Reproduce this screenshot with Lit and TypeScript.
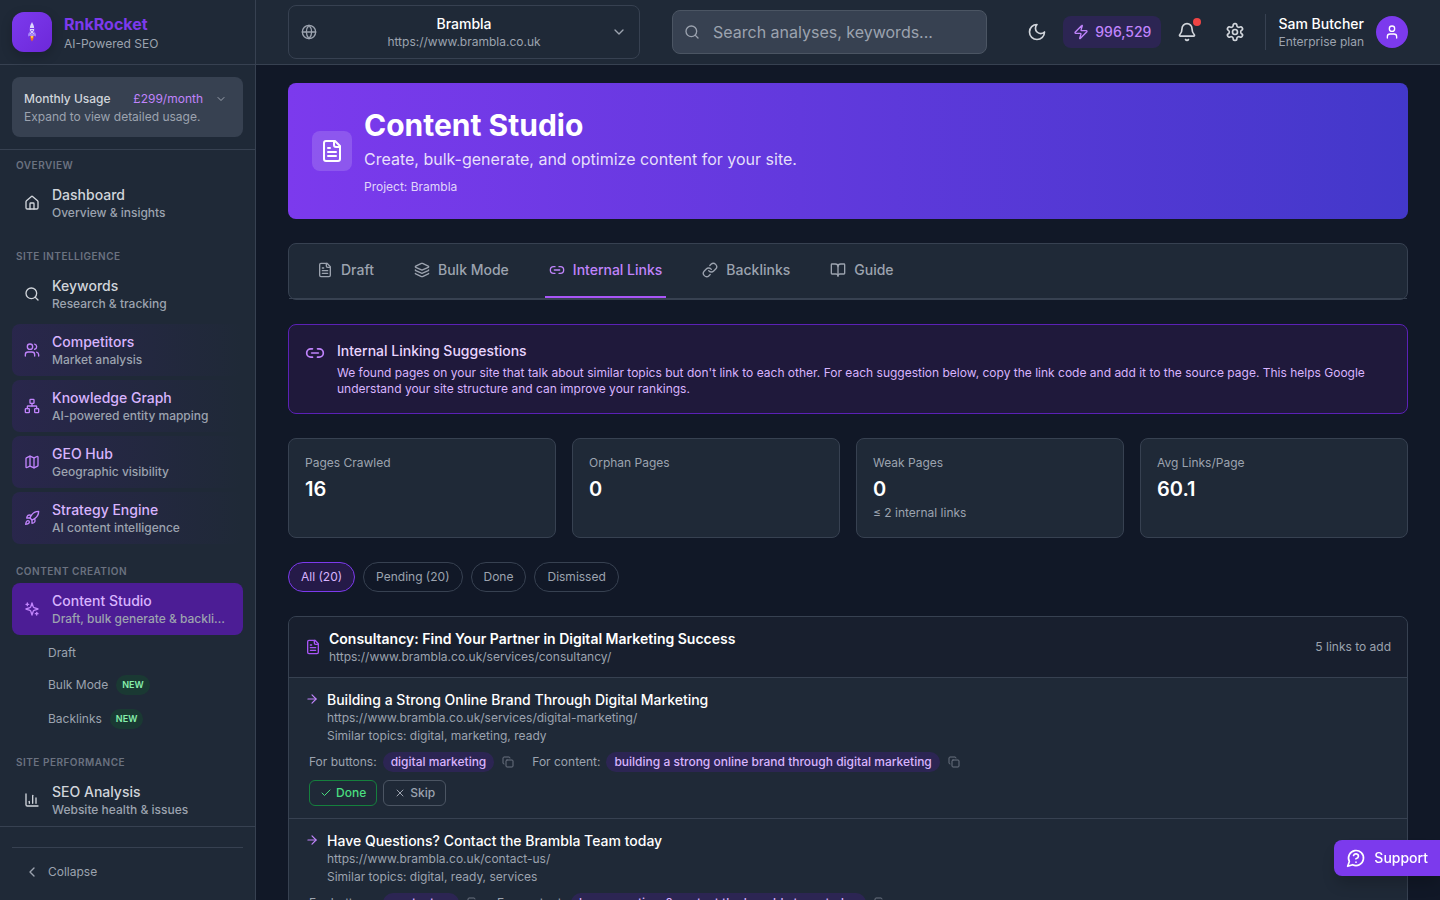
import { LitElement, html, css, svg, nothing } from "lit";
import type { TemplateResult, SVGTemplateResult } from "lit";
import { customElement, property, state } from "lit/decorators.js";
import { classMap } from "lit/directives/class-map.js";

const ICONS: Record<string, SVGTemplateResult> = {
  house: svg`<path d="M15 21v-8a1 1 0 0 0-1-1h-4a1 1 0 0 0-1 1v8"/><path d="M3 10a2 2 0 0 1 .709-1.528l7-5.999a2 2 0 0 1 2.582 0l7 5.999A2 2 0 0 1 21 10v9a2 2 0 0 1-2 2H5a2 2 0 0 1-2-2z"/>`,
  search: svg`<circle cx="11" cy="11" r="8"/><path d="m21 21-4.3-4.3"/>`,
  users: svg`<path d="M16 21v-2a4 4 0 0 0-4-4H6a4 4 0 0 0-4 4v2"/><circle cx="9" cy="7" r="4"/><path d="M22 21v-2a4 4 0 0 0-3-3.87"/><path d="M16 3.13a4 4 0 0 1 0 7.75"/>`,
  network: svg`<rect x="16" y="16" width="6" height="6" rx="1"/><rect x="2" y="16" width="6" height="6" rx="1"/><rect x="9" y="2" width="6" height="6" rx="1"/><path d="M5 16v-3a1 1 0 0 1 1-1h12a1 1 0 0 1 1 1v3"/><path d="M12 12V8"/>`,
  map: svg`<path d="M14.106 5.553a2 2 0 0 0 1.788 0l3.659-1.83A1 1 0 0 1 21 4.619v12.764a1 1 0 0 1-.553.894l-4.553 2.277a2 2 0 0 1-1.788 0l-4.212-2.106a2 2 0 0 0-1.788 0l-3.659 1.83A1 1 0 0 1 3 19.381V6.618a1 1 0 0 1 .553-.894l4.553-2.277a2 2 0 0 1 1.788 0z"/><path d="M15 5.764v15"/><path d="M9 3.236v15"/>`,
  rocket: svg`<path d="M4.5 16.5c-1.5 1.26-2 5-2 5s3.74-.5 5-2c.71-.84.7-2.13-.09-2.91a2.18 2.18 0 0 0-2.91-.09z"/><path d="m12 15-3-3a22 22 0 0 1 2-3.95A12.88 12.88 0 0 1 22 2c0 2.72-.78 7.5-6 11a22.35 22.35 0 0 1-4 2z"/><path d="M9 12H4s.55-3.03 2-4c1.62-1.08 5 0 5 0"/><path d="M12 15v5s3.03-.55 4-2c1.08-1.62 0-5 0-5"/>`,
  sparkles: svg`<path d="m12 3-1.912 5.813a2 2 0 0 1-1.275 1.275L3 12l5.813 1.912a2 2 0 0 1 1.275 1.275L12 21l1.912-5.813a2 2 0 0 1 1.275-1.275L21 12l-5.813-1.912a2 2 0 0 1-1.275-1.275L12 3Z"/><path d="M5 3v4"/><path d="M19 17v4"/><path d="M3 5h4"/><path d="M17 19h4"/>`,
  chart: svg`<path d="M3 3v16a2 2 0 0 0 2 2h16"/><path d="M18 17V9"/><path d="M13 17V5"/><path d="M8 17v-3"/>`,
  chevronDown: svg`<path d="m6 9 6 6 6-6"/>`,
  chevronLeft: svg`<path d="m15 18-6-6 6-6"/>`,
  globe: svg`<circle cx="12" cy="12" r="10"/><path d="M12 2a14.5 14.5 0 0 0 0 20 14.5 14.5 0 0 0 0-20"/><path d="M2 12h20"/>`,
  moon: svg`<path d="M12 3a6 6 0 0 0 9 9 9 9 0 1 1-9-9Z"/>`,
  zap: svg`<path d="M4 14a1 1 0 0 1-.78-1.63l9.9-10.2a.5.5 0 0 1 .86.46l-1.92 6.02A1 1 0 0 0 13 10h7a1 1 0 0 1 .78 1.63l-9.9 10.2a.5.5 0 0 1-.86-.46l1.92-6.02A1 1 0 0 0 11 14z"/>`,
  bell: svg`<path d="M10.268 21a2 2 0 0 0 3.464 0"/><path d="M3.262 15.326A1 1 0 0 0 4 17h16a1 1 0 0 0 .74-1.673C19.41 13.956 18 12.499 18 8A6 6 0 0 0 6 8c0 4.499-1.411 5.956-2.738 7.326"/>`,
  settings: svg`<path d="M12.22 2h-.44a2 2 0 0 0-2 2v.18a2 2 0 0 1-1 1.73l-.43.25a2 2 0 0 1-2 0l-.15-.08a2 2 0 0 0-2.73.73l-.22.38a2 2 0 0 0 .73 2.73l.15.1a2 2 0 0 1 1 1.72v.51a2 2 0 0 1-1 1.74l-.15.09a2 2 0 0 0-.73 2.73l.22.38a2 2 0 0 0 2.73.73l.15-.08a2 2 0 0 1 2 0l.43.25a2 2 0 0 1 1 1.73V20a2 2 0 0 0 2 2h.44a2 2 0 0 0 2-2v-.18a2 2 0 0 1 1-1.73l.43-.25a2 2 0 0 1 2 0l.15.08a2 2 0 0 0 2.73-.73l.22-.39a2 2 0 0 0-.73-2.73l-.15-.08a2 2 0 0 1-1-1.74v-.5a2 2 0 0 1 1-1.74l.15-.09a2 2 0 0 0 .73-2.73l-.22-.38a2 2 0 0 0-2.73-.73l-.15.08a2 2 0 0 1-2 0l-.43-.25a2 2 0 0 1-1-1.73V4a2 2 0 0 0-2-2z"/><circle cx="12" cy="12" r="3"/>`,
  user: svg`<path d="M19 21v-2a4 4 0 0 0-4-4H9a4 4 0 0 0-4 4v2"/><circle cx="12" cy="7" r="4"/>`,
  file: svg`<path d="M15 2H6a2 2 0 0 0-2 2v16a2 2 0 0 0 2 2h12a2 2 0 0 0 2-2V7Z"/><path d="M14 2v4a2 2 0 0 0 2 2h4"/><path d="M10 9H8"/><path d="M16 13H8"/><path d="M16 17H8"/>`,
  layers: svg`<path d="M12.83 2.18a2 2 0 0 0-1.66 0L2.6 6.08a1 1 0 0 0 0 1.83l8.58 3.91a2 2 0 0 0 1.66 0l8.58-3.9a1 1 0 0 0 0-1.83z"/><path d="M2 12a1 1 0 0 0 .58.91l8.6 3.91a2 2 0 0 0 1.65 0l8.58-3.9A1 1 0 0 0 22 12"/><path d="M2 17a1 1 0 0 0 .58.91l8.6 3.91a2 2 0 0 0 1.65 0l8.58-3.9A1 1 0 0 0 22 17"/>`,
  link2: svg`<path d="M9 17H7A5 5 0 0 1 7 7h2"/><path d="M15 7h2a5 5 0 1 1 0 10h-2"/><path d="M8 12h8"/>`,
  link: svg`<path d="M10 13a5 5 0 0 0 7.54.54l3-3a5 5 0 0 0-7.07-7.07l-1.72 1.71"/><path d="M14 11a5 5 0 0 0-7.54-.54l-3 3a5 5 0 0 0 7.07 7.07l1.71-1.71"/>`,
  book: svg`<path d="M12 7v14"/><path d="M3 18a1 1 0 0 1-1-1V4a1 1 0 0 1 1-1h5a4 4 0 0 1 4 4 4 4 0 0 1 4-4h5a1 1 0 0 1 1 1v13a1 1 0 0 1-1 1h-6a3 3 0 0 0-3 3 3 3 0 0 0-3-3z"/>`,
  arrow: svg`<path d="M5 12h14"/><path d="m12 5 7 7-7 7"/>`,
  copy: svg`<rect x="8" y="8" width="14" height="14" rx="2"/><path d="M4 16c-1.1 0-2-.9-2-2V4c0-1.1.9-2 2-2h10c1.1 0 2 .9 2 2"/>`,
  check: svg`<path d="M20 6 9 17l-5-5"/>`,
  x: svg`<path d="M18 6 6 18"/><path d="m6 6 12 12"/>`,
  help: svg`<path d="M7.9 20A9 9 0 1 0 4 16.1L2 22Z"/><path d="M9.09 9a3 3 0 0 1 5.83 1c0 2-3 3-3 3"/><path d="M12 17h.01"/>`,
};

const icon = (name: string, size = 16): TemplateResult => html`<svg
  width=${size} height=${size} viewBox="0 0 24 24" fill="none" stroke="currentColor"
  stroke-width="2" stroke-linecap="round" stroke-linejoin="round" aria-hidden="true"
>${ICONS[name]}</svg>`;

const base = css`
  *, *::before, *::after { box-sizing: border-box; }
  :host {
    font-family: Inter, "Liberation Sans", sans-serif;
    font-size: 12px;
    line-height: 16px;
    color: #9ca3af;
  }
  h1, h2, h3, p, ul, dl, dd, dt { margin: 0; padding: 0; font-weight: 400; }
  ul { list-style: none; }
  a { color: inherit; text-decoration: none; }
  button {
    font: inherit;
    color: inherit;
    background: none;
    border: 0;
    margin: 0;
    padding: 0;
    cursor: pointer;
  }
  svg { display: block; flex: none; }
`;

interface NavItem {
  title: string;
  note: string;
  icon: string;
  tone?: "accent" | "active";
  children?: { title: string; fresh?: boolean }[];
}

const SECTIONS: { label: string; items: NavItem[] }[] = [
  { label: "Overview", items: [{ title: "Dashboard", note: "Overview & insights", icon: "house" }] },
  {
    label: "Site Intelligence",
    items: [
      { title: "Keywords", note: "Research & tracking", icon: "search" },
      { title: "Competitors", note: "Market analysis", icon: "users", tone: "accent" },
      { title: "Knowledge Graph", note: "AI-powered entity mapping", icon: "network", tone: "accent" },
      { title: "GEO Hub", note: "Geographic visibility", icon: "map", tone: "accent" },
      { title: "Strategy Engine", note: "AI content intelligence", icon: "rocket", tone: "accent" },
    ],
  },
  {
    label: "Content Creation",
    items: [
      {
        title: "Content Studio",
        note: "Draft, bulk generate & backlinks",
        icon: "sparkles",
        tone: "active",
        children: [{ title: "Draft" }, { title: "Bulk Mode", fresh: true }, { title: "Backlinks", fresh: true }],
      },
    ],
  },
  {
    label: "Site Performance",
    items: [{ title: "SEO Analysis", note: "Website health & issues", icon: "chart" }],
  },
];

@customElement("app-sidebar")
export class AppSidebar extends LitElement {
  static styles = [
    base,
    css`
      :host {
        display: flex;
        flex-direction: column;
        flex: none;
        width: 256px;
        height: 100%;
        background: #1f2937;
        border-right: 1px solid #374151;
      }
      .brand {
        display: flex;
        align-items: center;
        gap: 12px;
        padding: 12px;
        border-bottom: 1px solid #374151;
      }
      .logo {
        display: grid;
        place-items: center;
        width: 40px;
        height: 40px;
        border-radius: 12px;
        background: linear-gradient(135deg, #7c3aed, #6d28d9);
        box-shadow: 0 4px 12px rgba(0, 0, 0, 0.2);
      }
      .name { font-size: 16px; line-height: 24px; font-weight: 700; color: #7c3aed; }
      .usage { padding: 12px; border-bottom: 1px solid #374151; }
      .usage-box { padding: 12px; border-radius: 8px; background: #374151; }
      .usage-row { display: flex; align-items: center; gap: 8px; }
      .usage-title { flex: 1; font-weight: 500; color: #d1d5db; }
      .price { color: #c084fc; }
      .expand { padding: 4px; }
      .nav {
        flex: 1;
        min-height: 0;
        overflow: hidden;
        display: flex;
        flex-direction: column;
        gap: 20px;
        padding: 8px 12px 0;
      }
      .label {
        padding: 0 4px;
        margin-bottom: 4px;
        font-size: 10px;
        line-height: 15px;
        font-weight: 600;
        letter-spacing: 0.5px;
        text-transform: uppercase;
        color: #6b7280;
      }
      .list { display: flex; flex-direction: column; gap: 4px; }
      .item {
        display: flex;
        align-items: center;
        gap: 12px;
        padding: 8px 12px;
        border-radius: 8px;
        font-weight: 500;
        color: #d1d5db;
      }
      .text { min-width: 0; flex: 1; }
      .title { display: block; font-size: 14px; line-height: 20px; color: #d1d5db; }
      .note {
        display: block;
        color: #9ca3af;
        overflow: hidden;
        white-space: nowrap;
        text-overflow: ellipsis;
      }
      .accent { color: #c084fc; background: linear-gradient(90deg, rgba(76, 29, 149, 0.22), rgba(76, 29, 149, 0)); }
      .active { color: #c084fc; background: #4c1d95; }
      .accent .title, .active .title { color: #d8b4fe; }
      .children { display: flex; flex-direction: column; gap: 2px; margin-top: 4px; padding-left: 24px; }
      .child { display: flex; align-items: center; gap: 8px; padding: 6px 12px; }
      .badge {
        padding: 0 6px;
        border-radius: 10px;
        font-size: 9px;
        line-height: 20px;
        font-weight: 600;
        color: #86efac;
        background: rgba(20, 83, 45, 0.4);
      }
      .foot { padding: 20px 12px 12px; border-top: 1px solid #374151; }
      .foot-in { padding-top: 8px; border-top: 1px solid #374151; }
      .collapse { display: flex; align-items: center; gap: 8px; width: 100%; padding: 8px 12px; }
    `,
  ];

  private item(i: NavItem) {
    const classes = { item: true, accent: i.tone === "accent", active: i.tone === "active" };
    return html`<li>
      <a class=${classMap(classes)} href="#" aria-current=${i.tone === "active" ? "page" : nothing}>
        ${icon(i.icon)}
        <span class="text"><span class="title">${i.title}</span><span class="note">${i.note}</span></span>
      </a>
      ${i.children
        ? html`<ul class="children">
            ${i.children.map(
              (c) => html`<li><a class="child" href="#">${c.title}${c.fresh ? html`<span class="badge">NEW</span>` : nothing}</a></li>`
            )}
          </ul>`
        : nothing}
    </li>`;
  }

  render() {
    return html`
      <div class="brand">
        <div class="logo">
          <svg width="10" height="20" viewBox="0 0 10 20" aria-hidden="true">
            <path d="M3.200 14h3.600l-.5 3L5 19.500l-1.300-2.500z" fill="#f97316"/>
            <path d="M4 14h2l-.3 1.500L5 16.500l-.7-1z" fill="#fde047"/>
            <path d="M2.600 9.500 1.200 12v2.500l2-1zM7.400 9.500l1.400 2.500v2.500l-2-1z" fill="#a78bfa"/>
            <path d="M5 0c.5 1.600 2.200 3.200 2.200 6.500L6.800 14H3.200l-.4-7.500C2.800 3.200 4.500 1.600 5 0z" fill="#ddd6fe"/>
            <path d="M2.600 6h4.800v1H2.600zM3 12.500h4v1H3z" fill="#7c3aed"/>
            <circle cx="5" cy="10" r="1.500" fill="#fff" stroke="#8b5cf6"/>
          </svg>
        </div>
        <div><p class="name">RnkRocket</p><p>AI-Powered SEO</p></div>
      </div>
      <div class="usage">
        <div class="usage-box">
          <div class="usage-row">
            <span class="usage-title">Monthly Usage</span>
            <span class="price">£299/month</span>
            <button class="expand" aria-label="Expand usage">${icon("chevronDown", 12)}</button>
          </div>
          <p>Expand to view detailed usage.</p>
        </div>
      </div>
      <nav class="nav" aria-label="Main">
        ${SECTIONS.map(
          (s) => html`<section><h2 class="label">${s.label}</h2><ul class="list">${s.items.map((i) => this.item(i))}</ul></section>`
        )}
      </nav>
      <div class="foot">
        <div class="foot-in"><button class="collapse">${icon("chevronLeft")}Collapse</button></div>
      </div>
    `;
  }
}

@customElement("app-topbar")
export class AppTopbar extends LitElement {
  static styles = [
    base,
    css`
      :host {
        display: flex;
        align-items: center;
        gap: 32px;
        flex: none;
        height: 65px;
        padding: 0 32px;
        background: #1f2937;
        border-bottom: 1px solid #374151;
      }
      .site {
        display: flex;
        align-items: center;
        width: 352px;
        padding: 8px 12px;
        border: 1px solid #374151;
        border-radius: 8px;
      }
      .site-text { flex: 1; text-align: center; }
      .strong { display: block; font-size: 14px; line-height: 20px; font-weight: 500; color: #fff; }
      .search {
        flex: 1;
        min-width: 0;
        display: flex;
        align-items: center;
        gap: 12px;
        height: 44px;
        padding: 0 11px;
        border: 1px solid #4b5563;
        border-radius: 8px;
        background: #374151;
      }
      .field {
        flex: 1;
        min-width: 0;
        padding: 0 1px;
        border: 0;
        outline: 0;
        background: none;
        font: inherit;
        font-size: 16px;
        line-height: 24px;
        color: #fff;
      }
      .field::placeholder { color: #9ca3af; opacity: 1; }
      .actions { display: flex; align-items: center; gap: 12px; }
      .group { display: flex; align-items: center; gap: 8px; }
      .round { position: relative; padding: 8px; color: #d1d5db; }
      .dot {
        position: absolute;
        top: 4px;
        right: 4px;
        width: 8px;
        height: 8px;
        border-radius: 50%;
        background: #ef4444;
      }
      .credits {
        display: flex;
        align-items: center;
        gap: 6px;
        padding: 6px 10px;
        border-radius: 8px;
        font-size: 14px;
        line-height: 20px;
        font-weight: 500;
        color: #c084fc;
        background: rgba(76, 29, 149, 0.3);
      }
      .user {
        display: flex;
        align-items: center;
        gap: 12px;
        padding-left: 12px;
        border-left: 1px solid #374151;
        text-align: left;
      }
      .avatar {
        display: grid;
        place-items: center;
        width: 32px;
        height: 32px;
        border-radius: 50%;
        color: #fff;
        background: #7c3aed;
      }
    `,
  ];

  render() {
    return html`
      <button class="site" aria-haspopup="listbox">
        ${icon("globe")}
        <span class="site-text"><span class="strong">Brambla</span>https://www.brambla.co.uk</span>
        ${icon("chevronDown")}
      </button>
      <label class="search">
        ${icon("search")}
        <input class="field" type="search" placeholder="Search analyses, keywords..." aria-label="Search" />
      </label>
      <div class="actions">
        <div class="group">
          <button class="round" aria-label="Toggle theme">${icon("moon", 20)}</button>
          <button class="credits">${icon("zap")}996,529</button>
          <button class="round" aria-label="Notifications">${icon("bell", 20)}<span class="dot"></span></button>
        </div>
        <button class="round" aria-label="Settings">${icon("settings", 20)}</button>
        <button class="user">
          <span><span class="strong">Sam Butcher</span>Enterprise plan</span>
          <span class="avatar">${icon("user")}</span>
        </button>
      </div>
    `;
  }
}

interface Suggestion {
  title: string;
  url: string;
  topics: string;
  forButtons: string;
  forContent: string;
}

@customElement("link-suggestion")
export class LinkSuggestion extends LitElement {
  @property({ attribute: false }) data!: Suggestion;

  static styles = [
    base,
    css`
      :host { display: block; padding: 12px 16px; border-top: 1px solid #374151; }
      .head { display: flex; gap: 8px; }
      .arrow { padding-top: 2px; color: #c084fc; }
      .title { font-size: 14px; line-height: 20px; font-weight: 500; color: #fff; }
      .topics { margin-top: 2px; }
      .body { display: flex; flex-direction: column; gap: 8px; padding: 8px 4px 0; }
      .anchors { display: flex; flex-wrap: wrap; gap: 8px 16px; }
      .anchor, .buttons { display: flex; align-items: center; gap: 6px; }
      .pill {
        padding: 2px 8px;
        border-radius: 10px;
        font-weight: 500;
        color: #d8b4fe;
        background: rgba(76, 29, 149, 0.3);
      }
      .copy { padding: 2px; color: #6b7280; }
      .btn {
        display: flex;
        align-items: center;
        gap: 4px;
        padding: 4px 10px;
        border: 1px solid #4b5563;
        border-radius: 6px;
        font-weight: 500;
      }
      .done { color: #4ade80; border-color: #15803d; }
    `,
  ];

  private anchor(label: string, text: string) {
    return html`<div class="anchor">
      <span>${label}</span><span class="pill">${text}</span>
      <button class="copy" aria-label="Copy link code">${icon("copy", 12)}</button>
    </div>`;
  }

  render() {
    const d = this.data;
    return html`
      <div class="head">
        <div class="arrow">${icon("arrow", 14)}</div>
        <div>
          <h3 class="title">${d.title}</h3>
          <p><a href=${d.url}>${d.url}</a></p>
          <p class="topics">Similar topics: ${d.topics}</p>
        </div>
      </div>
      <div class="body">
        <div class="anchors">${this.anchor("For buttons:", d.forButtons)}${this.anchor("For content:", d.forContent)}</div>
        <div class="buttons">
          <button class="btn done">${icon("check", 12)}Done</button>
          <button class="btn">${icon("x", 12)}Skip</button>
        </div>
      </div>
    `;
  }
}

const TABS = [
  ["Draft", "file"],
  ["Bulk Mode", "layers"],
  ["Internal Links", "link2"],
  ["Backlinks", "link"],
  ["Guide", "book"],
];

const STATS = [
  { label: "Pages Crawled", value: "16" },
  { label: "Orphan Pages", value: "0" },
  { label: "Weak Pages", value: "0", note: "≤ 2 internal links" },
  { label: "Avg Links/Page", value: "60.1" },
];

const FILTERS = ["All (20)", "Pending (20)", "Done", "Dismissed"];

const SUGGESTIONS: Suggestion[] = [
  {
    title: "Building a Strong Online Brand Through Digital Marketing",
    url: "https://www.brambla.co.uk/services/digital-marketing/",
    topics: "digital, marketing, ready",
    forButtons: "digital marketing",
    forContent: "building a strong online brand through digital marketing",
  },
  {
    title: "Have Questions? Contact the Brambla Team today",
    url: "https://www.brambla.co.uk/contact-us/",
    topics: "digital, ready, services",
    forButtons: "contact us",
    forContent: "have questions? contact the brambla team today",
  },
];

@customElement("app-root")
export class AppRoot extends LitElement {
  @state() private tab = "Internal Links";
  @state() private filter = "All (20)";

  static styles = [
    base,
    css`
      :host { display: flex; height: 100vh; overflow: hidden; background: #111827; }
      .column { flex: 1; min-width: 0; display: flex; flex-direction: column; }
      .main {
        flex: 1;
        min-height: 0;
        overflow: hidden;
        display: flex;
        flex-direction: column;
        gap: 24px;
        padding: 18px 32px 0;
      }
      .main > * { flex: none; }
      .hero {
        display: flex;
        align-items: center;
        gap: 12px;
        padding: 24px;
        border-radius: 8px;
        color: #fff;
        background: linear-gradient(90deg, #7c3aed, #4338ca);
      }
      .hero-icon { padding: 8px; border-radius: 8px; background: rgba(255, 255, 255, 0.15); }
      .hero-title { font-size: 30px; line-height: 36px; font-weight: 700; }
      .hero-sub { margin-top: 4px; font-size: 16px; line-height: 24px; color: rgba(255, 255, 255, 0.85); }
      .hero-note { margin-top: 8px; color: rgba(255, 255, 255, 0.8); }
      .card { border: 1px solid #374151; border-radius: 8px; background: #1f2937; }
      .tabs { display: flex; gap: 32px; padding: 0 24px; border-bottom: 1px solid #374151; }
      .tab {
        display: flex;
        align-items: center;
        gap: 8px;
        padding: 16px 4px;
        border-bottom: 2px solid transparent;
        font-size: 14px;
        line-height: 20px;
        font-weight: 500;
      }
      .tab.on { color: #c084fc; border-color: #a855f7; }
      .notice {
        display: flex;
        gap: 12px;
        padding: 16px;
        border: 1px solid #5b21b6;
        border-radius: 8px;
        color: #d8b4fe;
        background: #1f193b;
      }
      .notice-icon { padding-top: 2px; color: #c084fc; }
      .notice-title { margin-bottom: 4px; font-size: 14px; line-height: 20px; font-weight: 500; color: #e9d5ff; }
      .stats { display: grid; grid-template-columns: repeat(4, 1fr); gap: 16px; }
      .stat { padding: 16px; }
      .value { margin-top: 4px; font-size: 20px; line-height: 28px; font-weight: 600; color: #fff; }
      .stat-note { margin-top: 2px; }
      .filters { display: flex; gap: 8px; }
      .filter { padding: 6px 12px; border: 1px solid #374151; border-radius: 16px; }
      .filter.on { color: #d8b4fe; border-color: #7c3aed; background: #251a48; }
      .page { display: flex; align-items: center; gap: 8px; padding: 12px 16px; background: #181f2e; border-radius: 7px 7px 0 0; }
      .page-icon { color: #a855f7; }
      .page-text { flex: 1; min-width: 0; }
      .page-title { font-size: 14px; line-height: 20px; font-weight: 600; color: #fff; }
      .support {
        position: fixed;
        right: 0;
        bottom: 24px;
        display: flex;
        align-items: center;
        gap: 8px;
        padding: 8px 12px;
        border-radius: 8px 0 0 8px;
        font-size: 14px;
        line-height: 20px;
        font-weight: 500;
        color: #fff;
        background: #7c3aed;
        box-shadow: 0 10px 15px -3px rgba(0, 0, 0, 0.2);
      }
    `,
  ];

  render() {
    return html`
      <app-sidebar></app-sidebar>
      <div class="column">
        <app-topbar></app-topbar>
        <main class="main">
          <header class="hero">
            <div class="hero-icon">${icon("file", 24)}</div>
            <div>
              <h1 class="hero-title">Content Studio</h1>
              <p class="hero-sub">Create, bulk-generate, and optimize content for your site.</p>
              <p class="hero-note">Project: Brambla</p>
            </div>
          </header>

          <div class="card">
            <div class="tabs" role="tablist">
              ${TABS.map(
                ([label, name]) => html`<button
                  class=${classMap({ tab: true, on: this.tab === label })}
                  role="tab"
                  aria-selected=${this.tab === label}
                  @click=${() => (this.tab = label)}
                >${icon(name)}${label}</button>`
              )}
            </div>
          </div>

          <section class="notice">
            <div class="notice-icon">${icon("link2", 20)}</div>
            <div>
              <h2 class="notice-title">Internal Linking Suggestions</h2>
              <p>
                We found pages on your site that talk about similar topics but don't link to each other. For each suggestion
                below, copy the link code and add it to the source page. This helps Google understand your site structure
                and can improve your rankings.
              </p>
            </div>
          </section>

          <div class="stats">
            ${STATS.map(
              (s) => html`<dl class="card stat">
                <dt>${s.label}</dt>
                <dd class="value">${s.value}</dd>
                ${s.note ? html`<dd class="stat-note">${s.note}</dd>` : nothing}
              </dl>`
            )}
          </div>

          <div class="filters">
            ${FILTERS.map(
              (f) => html`<button
                class=${classMap({ filter: true, on: this.filter === f })}
                aria-pressed=${this.filter === f}
                @click=${() => (this.filter = f)}
              >${f}</button>`
            )}
          </div>

          <section class="card">
            <div class="page">
              <div class="page-icon">${icon("file")}</div>
              <div class="page-text">
                <h2 class="page-title">Consultancy: Find Your Partner in Digital Marketing Success</h2>
                <p><a href="https://www.brambla.co.uk/services/consultancy/">https://www.brambla.co.uk/services/consultancy/</a></p>
              </div>
              <span>5 links to add</span>
            </div>
            ${SUGGESTIONS.map((s) => html`<link-suggestion .data=${s}></link-suggestion>`)}
          </section>
        </main>
      </div>
      <button class="support">${icon("help", 20)}Support</button>
    `;
  }
}
